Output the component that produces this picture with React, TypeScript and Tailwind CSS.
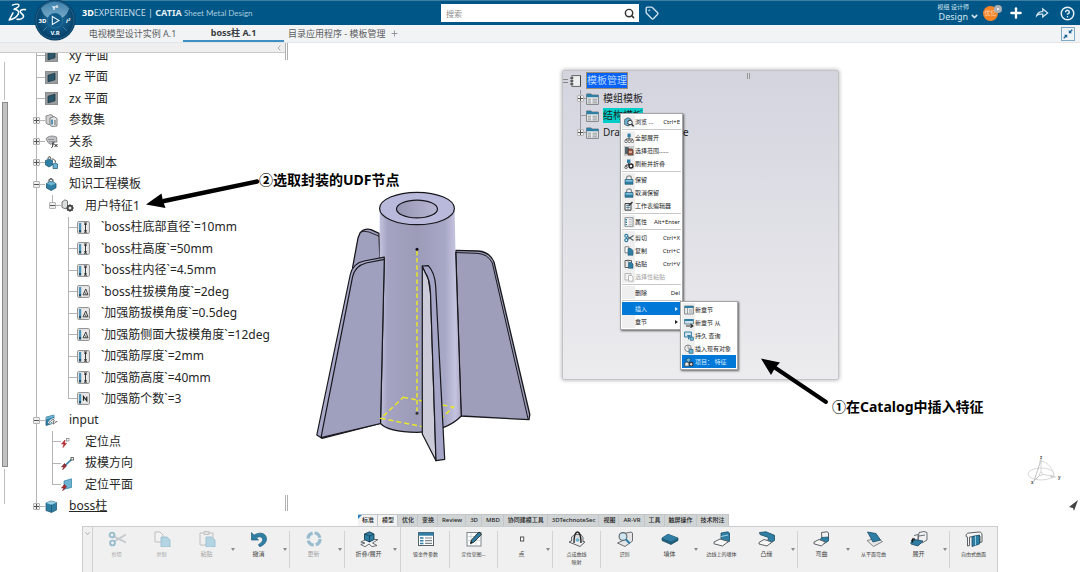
import React from "react";
import { ChevronDown, ChevronLeft, Plus, Search, Tag } from "lucide-react";
import { RiShareForwardLine } from "react-icons/ri";

const BLUE = "#2f7fa5";
const LIGHT = "#6bb3d3";
const DARK = "#5b6166";

/* ---------- Header ---------- */

function Logo() {
  return (
    <svg className="h-[20px] w-[22px]" viewBox="0 0 22 20" fill="none" stroke="#fff" strokeLinecap="round" strokeLinejoin="round" aria-hidden="true">
      <path d="M5.500 2.200C8 1 12.200.6 12 2.400c-.2 1.700-2.500 2.800-4.600 3.600" strokeWidth="1.300" />
      <path d="M7 6.200c3.600.4 5.400 2 4.400 4.400-1.100 2.800-5 5.400-9.200 6.400L6 9.800" strokeWidth="1.500" />
      <path d="M18.400 6.600c-2.800-.4-5 .3-5.200 1.900-.2 1.600 3.600 2.600 3.400 4.800-.2 2.200-3.600 3.200-6.600 3" strokeWidth="1.600" />
    </svg>
  );
}

function Compass() {
  return (
    <svg className="h-[42px] w-[42px]" viewBox="0 0 42 42" aria-hidden="true">
      <defs>
        <radialGradient id="dial" cx=".5" cy=".45" r=".55">
          <stop offset="0" stopColor="#2d78a5" />
          <stop offset=".6" stopColor="#0d527e" />
          <stop offset="1" stopColor="#053a60" />
        </radialGradient>
        <linearGradient id="gloss" x1="0" y1="0" x2="0" y2="1">
          <stop offset="0" stopColor="#4c8fb8" />
          <stop offset="1" stopColor="#8fbbd6" />
        </linearGradient>
      </defs>
      <circle cx="21" cy="21" r="20.500" fill="url(#dial)" />
      <circle cx="21" cy="21" r="19" fill="none" stroke="#2d6f98" strokeWidth=".7" />
      <path d="M7 9.500A18 18 0 0 1 35 9.500Q34 15 28 19a8.500 8.500 0 0 0-14 0Q8 15 7 9.500Z" fill="url(#gloss)" opacity=".8" />
      <circle cx="21" cy="21.500" r="7.500" fill="#105a89" stroke="#2e7cab" strokeWidth=".6" />
      <path d="M18.300 17.500 25 21.500l-6.700 4Z" fill="none" stroke="#e8f2f8" strokeWidth="1.100" />
      <path d="M9 32l4-4M33 32l-4-4" stroke="#3f88b3" strokeWidth=".8" />
      <g fill="#fff" fontFamily="Noto Sans, sans-serif" fontWeight="700" textAnchor="middle">
        <text x="8.500" y="23.500" fontSize="6">3D</text>
        <text x="34" y="23.500" fontSize="6" fontStyle="italic">i²</text>
        <text x="21" y="36" fontSize="6">V.R</text>
        <text x="21" y="11" fontSize="6">Y⁶</text>
      </g>
    </svg>
  );
}

function Header() {
  return (
    <header className="relative grid h-[25px] shrink-0 grid-cols-[1fr_auto_1fr] items-center border-t border-[#3f7da3] bg-[#005686] text-white">
      <div className="flex items-center pl-[7px]">
        <Logo />
        <h1 className="ml-[53px] whitespace-nowrap text-[9px] leading-3 text-[#c4dbe8]">
          <b className="text-white">3D</b>EXPERIENCE | <b className="text-[#e2edf4]">CATIA</b>{" "}
          <span className="font-['Lato',sans-serif] text-[8px] text-[#a9cbdf]">Sheet Metal Design</span>
        </h1>
      </div>
      <form className="flex h-[18px] w-[198px] items-center bg-white pr-[4px]" onSubmit={(e) => e.preventDefault()}>
        <input
          aria-label="搜索"
          placeholder="搜索"
          className="h-full min-w-0 flex-1 bg-transparent pl-[5px] text-[8px] text-gray-700 outline-none placeholder:text-[#8d8d8d]"
        />
        <button type="submit" aria-label="搜索" className="text-[#333]">
          <Search size={11} strokeWidth={3.200} />
        </button>
      </form>
      <div className="flex items-center justify-between pl-[6px] pr-[5px]">
        <button aria-label="标签" className="text-[#cfe2ee]">
          <Tag size={14} strokeWidth={2.400} />
        </button>
        <div className="flex items-center gap-[11px]">
          <button className="flex flex-col items-end leading-none text-[#d5e6f0]">
            <span className="pr-[10px] text-[6px] leading-[7px]">模组 设计师</span>
            <span className="flex items-center gap-[2px] text-[9px] leading-[11px]">
              Design
              <ChevronDown size={9} strokeWidth={4} />
            </span>
          </button>
          <button aria-label="用户" className="relative -ml-[7px] mr-[2px] h-[15px] w-[15px] rounded-full bg-[#f58426] text-[6px] leading-[15px] text-[#ffd9b8]">
            优忆
            <span className="absolute -right-[4px] -top-[1px] grid h-[8px] w-[8px] place-items-center rounded-full bg-[#a9b0b6]">
              <span className="h-[2px] w-[2px] rounded-full bg-white" />
            </span>
          </button>
          <button aria-label="添加" className="-ml-[3px]"><Plus size={16} strokeWidth={3.500} /></button>
          <button aria-label="共享" className="-ml-[1px]"><RiShareForwardLine size={15} color="#d5e6f0" /></button>
          <button aria-label="帮助">
            <svg className="h-[15px] w-[15px]" viewBox="0 0 24 24" fill="none" stroke="#e6f0f6" strokeWidth="2.400" strokeLinecap="round" strokeLinejoin="round">
              <circle cx="12" cy="12" r="10" />
              <path d="M9.090 9a3 3 0 0 1 5.830 1c0 2-3 3-3 3M12 17h.01" />
            </svg>
          </button>
        </div>
      </div>
      <button aria-label="罗盘" className="absolute left-[34px] -top-[2px] z-10">
        <Compass />
      </button>
    </header>
  );
}

function DocumentTabs() {
  return (
    <nav className="flex h-[18px] shrink-0 items-center border-b border-[#e3e5e7] bg-[#f2f3f5] pl-[82px] pr-[5px] text-[9px] text-[#5b5e61]">
      <button className="h-full w-[101px] whitespace-nowrap leading-[16px]">电视模型设计实例 A.1</button>
      <button className="h-full w-[101px] whitespace-nowrap border-b-2 border-[#3f8fc4] font-bold leading-[16px] text-[#3b3e41]">boss柱 A.1</button>
      <button className="h-full whitespace-nowrap px-[4px] leading-[16px]">目录应用程序 - 模板管理</button>
      <button aria-label="新建标签页" className="text-[#8f9295]"><Plus size={9} strokeWidth={2.500} /></button>
      <button aria-label="退出全屏" className="ml-auto grid h-[14px] w-[14px] place-items-center border border-[#7fa9c4] bg-[#eef4f8]">
        <svg className="h-[10px] w-[10px]" viewBox="0 0 10 10" fill="#14608f" stroke="#14608f">
          <path d="M5.800 1v3.200H9ZM4.200 9V5.800H1Z" stroke="none" />
          <path d="M6.500 3.500 9.300.7M3.500 6.500.7 9.300" strokeWidth="1.300" />
        </svg>
      </button>
    </nav>
  );
}

/* ---------- Specification tree ---------- */

type TreeIconName = "plane" | "params" | "relation" | "copy" | "template" | "udf" | "length" | "angle" | "number" | "input" | "point" | "line" | "face" | "body";

function TreeIcon({ name }: { name: TreeIconName }) {
  const box = (
    <>
      <rect x=".6" y=".6" width="11.800" height="11.800" rx="1" fill="#e9e9e9" stroke="#8a8a8a" />
      <rect x="2" y="2" width="2.200" height="7" fill="#4b93b9" />
      <rect x="2" y="9" width="2.200" height="2.500" fill="#1f4f69" />
    </>
  );
  const art: Record<TreeIconName, React.ReactNode> = {
    plane: (
      <>
        <rect x=".5" y=".5" width="12" height="12" fill="#9a9d9f" stroke="#8b8e90" />
        <path d="M3 4.200 10 2.200v6.600L3 10.800Z" fill="#2b5569" stroke="#17323f" strokeWidth=".7" />
      </>
    ),
    params: (
      <>
        <path d="M1 2l5-1.500L8 2v8l-5 .5L1 9Z" fill="#cfd1d2" stroke="#777" strokeWidth=".8" />
        <path d="M5 4l4-1.500 3 2V12l-5 .5L5 11Z" fill="#e6e6e6" stroke="#666" strokeWidth=".8" />
        <path d="M7 5.500v5" stroke={BLUE} strokeWidth="1.600" />
        <path d="M10 6v5" stroke="#666" />
      </>
    ),
    relation: (
      <>
        <path d="M1 4C3 .5 8 .5 11.500 2L12 7H8L6 9.500 3 7.500Z" fill="#bfc2c4" stroke="#777" strokeWidth=".8" />
        <path d="M3 4.500h6M4 6.500h4" stroke="#777" strokeWidth=".6" />
        <path d="M6.500 12.500c1 0 1-1 1.300-3s.6-2.500 1.700-2.500M7 9h2.300M9.500 9l3 3M12.500 9l-3 3" fill="none" stroke="#222" />
      </>
    ),
    copy: (
      <>
        <path d="M3 3V1.500L5 .5 6 3" fill="none" stroke="#555" />
        <path d="M.5 4.500 4 3l3.500 1.500v4.500L4 11 .5 9Z" fill={BLUE} stroke="#1b5270" strokeWidth=".7" />
        <path d="M8 8l2-1 2.500 1v4.500H8Z" fill={LIGHT} stroke="#1b5270" strokeWidth=".7" />
        <path d="M7 3c2 0 3.500 1 3.500 3.500" fill="none" stroke="#444" />
      </>
    ),
    template: (
      <>
        <path d="M4 4V2l2-1.500L8 2v2" fill="none" stroke="#555" strokeWidth="1.200" />
        <path d="M1.500 5.500 6 3.200l5 2.300v4.300L6.200 12.500 1.500 10Z" fill={BLUE} stroke="#1b5270" strokeWidth=".8" />
        <path d="M1.500 5.500 6.200 7.500 11 5.500 6 3.200Z" fill={LIGHT} />
      </>
    ),
    udf: (
      <>
        <path d="M1 3 4 .8 6.500 2v4l1.500.7L5 10 1 8.500Z" fill="#dcdedf" stroke="#666" strokeWidth=".9" />
        <circle cx="9" cy="9" r="2.400" fill="none" stroke="#444" strokeWidth="1.600" />
        <path d="M9 5v8M5 9h8M6.200 6.200l5.600 5.600M11.800 6.200l-5.600 5.600" stroke="#444" strokeWidth=".9" />
        <circle cx="9" cy="9" r="1.200" fill="#eee" />
      </>
    ),
    length: (
      <>
        {box}
        <path d="M8.500 2.800v7.600M7 2h3M7 11.200h3M7.500 4l1-1.500 1 1.500M7.500 9.200l1 1.500 1-1.500" fill="none" stroke="#222" strokeWidth=".9" />
      </>
    ),
    angle: (
      <>
        {box}
        <path d="M6 9.800h5L8.800 4 6 9.800M7.500 7.500c1 0 1.600 1 1.600 2.200" fill="none" stroke="#333" strokeWidth=".9" />
      </>
    ),
    number: (
      <>
        {box}
        <path d="M6.500 8.800V4.500L9.800 8.800V4.500" fill="none" stroke="#222" strokeWidth="1.200" />
      </>
    ),
    input: (
      <>
        <path d="M1 3.200 9 1v8L1 11.500Z" fill={BLUE} stroke="#1b5270" strokeWidth=".7" />
        <path d="M1 3.200 9 1v2L1 5.500Z" fill={LIGHT} />
        <path d="M4 9.500C5 6.500 8 5 9 5.800s-2 3.700-1 4.200 2.500-3 4.200-2.500" fill="none" stroke="#fff" strokeWidth="2.600" />
        <path d="M4 9.500C5 6.500 8 5 9 5.800s-2 3.700-1 4.200 2.500-3 4.200-2.500" fill="none" stroke="#555" />
      </>
    ),
    point: (
      <>
        <path d="M4 5 .5 9 3 8.700l-1 3.800L5.500 8.200 3.500 8.500Z" fill="#c22a2e" stroke="#a32024" strokeWidth=".6" />
        <rect x="5.500" y="3.500" width="2.500" height="2.500" fill="#fff" stroke="#888" strokeWidth=".8" />
      </>
    ),
    line: (
      <>
        <path d="M3 9.500 11 2" stroke={BLUE} strokeWidth="1.700" />
        <rect x="10" y=".6" width="2.400" height="2.400" fill="#fff" stroke="#444" strokeWidth=".8" />
        <path d="M3.500 6.500 .5 10 3 9.700 1.500 12.800 5.500 9Z" fill="#9c3035" stroke="#6e1d21" strokeWidth=".6" />
      </>
    ),
    face: (
      <>
        <path d="M3 3 10.500.8v8.700L3 11.200Z" fill={LIGHT} stroke={BLUE} strokeWidth=".7" />
        <path d="M3.500 6.500 .5 10 3 9.700 1.500 12.800 5.500 9Z" fill="#b8282d" stroke="#7a1d21" strokeWidth=".6" />
      </>
    ),
    body: (
      <>
        <path d="M1 3 6 1l5.500 1.500v7.500L6.500 12.500 1 10.500Z" fill={BLUE} stroke="#1b5270" strokeWidth=".7" />
        <path d="M1 3 6 1l5.500 1.500L6.500 4.800Z" fill="#9ad0e6" />
        <path d="M6.500 4.800v7.500" stroke="#1b5270" strokeWidth=".7" />
      </>
    ),
  };
  return <svg className="h-[13px] w-[13px]" viewBox="0 0 13 13" aria-hidden="true">{art[name]}</svg>;
}

type Node = { label: string; icon: TreeIconName; depth: 0 | 1 | 2; fold?: "+" | "-"; last?: boolean; underline?: boolean };

const NODES: Node[] = [
  { label: "xy 平面", icon: "plane", depth: 0 },
  { label: "yz 平面", icon: "plane", depth: 0 },
  { label: "zx 平面", icon: "plane", depth: 0 },
  { label: "参数集", icon: "params", depth: 0, fold: "+" },
  { label: "关系", icon: "relation", depth: 0, fold: "+" },
  { label: "超级副本", icon: "copy", depth: 0, fold: "+" },
  { label: "知识工程模板", icon: "template", depth: 0, fold: "-" },
  { label: "用户特征1", icon: "udf", depth: 1, fold: "-", last: true },
  { label: "`boss柱底部直径`=10mm", icon: "length", depth: 2 },
  { label: "`boss柱高度`=50mm", icon: "length", depth: 2 },
  { label: "`boss柱内径`=4.5mm", icon: "length", depth: 2 },
  { label: "`boss柱拔模角度`=2deg", icon: "angle", depth: 2 },
  { label: "`加强筋拔模角度`=0.5deg", icon: "angle", depth: 2 },
  { label: "`加强筋侧面大拔模角度`=12deg", icon: "angle", depth: 2 },
  { label: "`加强筋厚度`=2mm", icon: "length", depth: 2 },
  { label: "`加强筋高度`=40mm", icon: "length", depth: 2 },
  { label: "`加强筋个数`=3", icon: "number", depth: 2, last: true },
  { label: "input", icon: "input", depth: 0, fold: "-" },
  { label: "定位点", icon: "point", depth: 1 },
  { label: "拔模方向", icon: "line", depth: 1 },
  { label: "定位平面", icon: "face", depth: 1, last: true },
  { label: "boss柱", icon: "body", depth: 0, fold: "+", underline: true, last: true },
];

function FoldBox({ sign }: { sign: "+" | "-" }) {
  return (
    <button aria-label={sign === "+" ? "展开" : "折叠"} className="relative grid h-[7px] w-[7px] place-items-center rounded-[1px] border border-[#b3b3b3] bg-[#f0f0f0]">
      <span className="col-start-1 row-start-1 h-px w-[5px] bg-[#555]" />
      {sign === "+" && <span className="col-start-1 row-start-1 h-[5px] w-px bg-[#555]" />}
    </button>
  );
}

function TreeRow({ node }: { node: Node }) {
  return (
    <li className="flex items-center pl-[23px]">
      {node.depth > 0 && <span className="ml-[3px] mr-[12px] w-px self-stretch bg-[#b5b5b5]" />}
      {node.depth > 1 && <span className="w-4" />}
      <span className="relative flex w-[12px] items-center self-stretch">
        <span className={`absolute left-[3px] top-0 w-px bg-[#b5b5b5] ${node.last ? "h-1/2" : "h-full"}`} />
        <span className="absolute left-[3px] h-px w-[9px] bg-[#b5b5b5]" />
        {node.fold && <FoldBox sign={node.fold} />}
      </span>
      <TreeIcon name={node.icon} />
      <span className={`ml-[11px] whitespace-nowrap text-[12px] leading-[14px] text-[#262626] ${node.underline ? "underline" : ""}`}>{node.label}</span>
    </li>
  );
}

function TreePanel() {
  return (
    <aside className="flex w-[288px] shrink-0">
      <div className="flex min-w-0 flex-1 flex-col">
        <div className="flex h-[10px] shrink-0 items-center justify-end border-b border-[#c9c9c9] bg-[#efefef] pr-[2px] text-[#888]">
          <ChevronLeft size={8} />
        </div>
        <div className="flex min-h-0 flex-1">
          <div className="flex w-[10px] flex-col items-start pb-[10px] pl-[2px] pt-[9px]">
            <span className="ml-[2px] h-[38px] w-px bg-[#bdbdbd]" />
            <span className="mt-[2px] w-[6px] flex-1 border border-[#8b8b8b] bg-[#c2c2c2]" />
            <span className="ml-[2px] mt-[2px] h-[35px] w-px bg-[#bdbdbd]" />
          </div>
          <div className="min-w-0 flex-1 overflow-hidden">
            <ul className="-mt-2 grid h-[calc(100%+11px)] auto-rows-fr">
              {NODES.map((n) => <TreeRow key={n.label} node={n} />)}
            </ul>
          </div>
        </div>
      </div>
      <div className="flex w-[3px] flex-col justify-between pb-[3px]">
        <span className="h-[17px] border-x border-[#b0b0b0]" />
        <span className="h-[16px] border-x border-[#b0b0b0]" />
      </div>
    </aside>
  );
}

/* ---------- 3D scene ---------- */

function Model() {
  return (
    <svg className="h-[272px] w-[216px]" viewBox="316 191 216 272" role="img" aria-label="boss柱">
      <defs>
        <linearGradient id="barrel" x1="0" x2="1" y1="0" y2="0">
          <stop offset="0" stopColor="#c3c3e0" />
          <stop offset=".1" stopColor="#a4a4c2" />
          <stop offset=".45" stopColor="#9c9cb9" />
          <stop offset=".8" stopColor="#a7a7c6" />
          <stop offset=".93" stopColor="#c4c4e0" />
          <stop offset="1" stopColor="#a9a9c6" />
        </linearGradient>
        <linearGradient id="bore" x1="0" x2="1" y1="0" y2="0">
          <stop offset="0" stopColor="#9696b3" />
          <stop offset="1" stopColor="#b6b6d2" />
        </linearGradient>
      </defs>
      <g stroke="#17171c" strokeWidth="1.300" strokeLinejoin="round">
        <path d="M379 233.300 371 229.600Q364 228 360 233L358 238 352.500 268 380 262Z" fill="#9f9fbe" />
        <path d="M379 236.200 369 232Q363 230.500 361 232" fill="none" strokeWidth=".9" />
        <path d="M455.700 250.300 478 251Q490 252 494 262L529.800 414.500 529 419.700 461 416Z" fill="#9e9ebb" />
        <path d="M455.700 252.600 477 253.300Q488 254 492.300 263L528 418.800" fill="none" strokeWidth="1" />
      </g>
      <path d="M379.700 209 379.500 423Q388 432 417 432.400 447 431 461 416L455.500 252 454.600 209Z" fill="url(#barrel)" />
      <path d="M380 423Q388 432 417 432.400 447 431 461.300 416L455.700 252" fill="none" stroke="#17171c" strokeWidth="1.200" />
      <ellipse cx="417" cy="208.500" rx="37.400" ry="16.200" fill="#b9b9dc" stroke="#17171c" strokeWidth="1.200" />
      <ellipse cx="417" cy="209" rx="20.500" ry="8.900" fill="url(#bore)" stroke="#17171c" strokeWidth="1.200" />
      <g stroke="#17171c" strokeWidth="1.200" strokeLinejoin="round">
        <path d="M384.300 257.200 364 261Q352.500 263.500 350.200 275L316.800 435 322 438.300 380.500 423.500Z" fill="#a8a8c9" />
        <path d="M384.300 259.400 366 263Q355 266 352.600 276.700L321 437.700 380.500 423.500Z" fill="#9f9fbe" />
      </g>
      <g fill="none" stroke="#e9e52a" strokeWidth="1.500">
        <path d="M403.300 397.300 453.300 407 430.700 428.300 381 418.300Z" strokeDasharray="5 3" />
        <path d="M417 251V411" strokeDasharray="4.500 2.600" />
      </g>
      <circle cx="417" cy="249.300" r="1.500" fill="#111" />
      <circle cx="417" cy="413.200" r="1.500" fill="#333" />
      <g stroke="#17171c" strokeWidth="1.200" strokeLinejoin="round">
        <path d="M422.300 266 428.300 279 430.500 293 436 460.700 422.300 434Z" fill="#cacad8" />
        <path d="M422.300 266 428.300 265.700Q435 273 435.700 286.700L444.700 459.300 436 460.700 430.500 293Q430 279 425 272Z" fill="#a5a5c7" />
      </g>
    </svg>
  );
}

function AxisTriad() {
  return (
    <svg className="h-[32px] w-[36px]" viewBox="0 0 36 32" fill="none" stroke="#d4d4d4" strokeWidth=".9" aria-hidden="true">
      <ellipse cx="15" cy="19" rx="13" ry="6" />
      <path d="M15 19V4l-1.500 4M15 19l15 3M15 6c7 1 12 8 13 15" />
      <path d="M15 19 8 26M15 5 8 26" stroke="#bbb" />
      <circle cx="15" cy="19" r="1.500" fill="#fff" />
      <circle cx="15" cy="6" r="1" />
      <path d="m24 20 5 2-4 1" fill="#ccc" />
      <g fill="#555" stroke="none" fontSize="4.500" fontFamily="Noto Sans, sans-serif" fontWeight="700">
        <text x="14" y="4">z</text>
        <text x="32" y="24">y</text>
        <text x="5" y="29">x</text>
      </g>
    </svg>
  );
}

/* ---------- Catalog window ---------- */

function FolderIcon() {
  return (
    <svg className="h-[12px] w-[13px]" viewBox="0 0 13 12" aria-hidden="true">
      <path d="M.6 3V.9h4.500L6.200 2h6.200v9.400H.6Z" fill="#ebebeb" stroke="#6f777b" strokeWidth=".9" />
      <path d="M.6 3V.9h4.500L6.200 2h6.200v2.200H.6Z" fill={BLUE} />
      <path d="M2 6.200h3M2 8h3M2 9.800h3M6.500 6.200h4.500M6.500 8h4.500M6.500 9.800h4.500" stroke="#7e878b" strokeWidth=".8" />
    </svg>
  );
}

const SECTIONS = [
  { label: "模组模板", fold: true, mark: "" },
  { label: "结构模板", fold: false, mark: "bg-[#00cdc8]" },
  { label: "Drawing Template", fold: true, mark: "" },
];

function CatalogWindow() {
  return (
    <section aria-label="模板管理" className="h-[310px] w-[277px] rounded-[2px] border border-[#c4c4c8] bg-linear-to-b from-[#d4d4df] to-[#ececee] text-[10px] text-[#1f1f1f] shadow-[0_0_4px_rgba(0,0,0,0.35)]">
      <div className="flex h-[19px] items-center">
        <span className="h-[4px] w-[5px] border-y border-[#888]" />
        <svg className="ml-[2px] h-[12px] w-[12px]" viewBox="0 0 12 12" aria-hidden="true">
          <rect x="2" y=".6" width="8.500" height="10.800" fill="#eee" stroke="#666" />
          <path d="M.3 3h3M.3 6h3M.3 9h3" stroke="#444" strokeWidth="1.300" />
          <path d="M10.500 1v10" stroke="#444" />
        </svg>
        <span className="ml-[5px] bg-[#0a62f5] leading-[15px] text-[#b9dbff] outline outline-[#9a9078]">模板管理</span>
        <span className="mb-[10px] ml-[120px] h-[6px] w-[3px] border-x border-[#999]" />
      </div>
      <ul>
        {SECTIONS.map((s, i) => (
          <li key={s.label} className="flex h-[17px] items-center pl-[14px]">
            <span className="relative flex w-[9px] items-center self-stretch">
              <span className={`absolute left-[3px] top-0 w-px bg-[#9a9aa3] ${i === 2 ? "h-1/2" : "h-full"}`} />
              <span className="absolute left-[3px] h-px w-[6px] bg-[#9a9aa3]" />
              {s.fold && <FoldBox sign="+" />}
            </span>
            <FolderIcon />
            <span className={`ml-[4px] whitespace-nowrap leading-[15px] ${s.mark}`}>{s.label}</span>
          </li>
        ))}
      </ul>
    </section>
  );
}

type MenuIconName = "browse" | "expand" | "range" | "refresh" | "lock" | "sheet" | "props" | "cut" | "copy" | "paste" | "special" | "chapter" | "chapterFrom" | "query" | "insert" | "item";

function MenuIcon({ name }: { name: MenuIconName }) {
  const art: Record<MenuIconName, React.ReactNode> = {
    browse: (
      <>
        <path d="M.7 2.500 4 .8l3 1.500v5L4 9 .7 7.500Z" fill={LIGHT} stroke="#3d5561" strokeWidth=".8" />
        <circle cx="6" cy="5.500" r="2.300" fill="#e8f2f7" stroke="#333" />
        <path d="m7.600 7.200 2 2.200" stroke="#222" strokeWidth="1.400" />
      </>
    ),
    expand: (
      <>
        <rect x="3.500" y=".6" width="3.200" height="3.600" fill={BLUE} />
        <path d="M5 4v2M2 8V6h6.500v2" fill="none" stroke="#444" strokeWidth=".9" />
        <circle cx="2" cy="8.300" r="1.300" fill="#fff" stroke="#555" strokeWidth=".8" />
        <circle cx="5.200" cy="8.300" r="1.300" fill="#fff" stroke="#555" strokeWidth=".8" />
        <circle cx="8.400" cy="8.300" r="1.300" fill="#fff" stroke="#555" strokeWidth=".8" />
      </>
    ),
    range: (
      <>
        <rect width="10" height="10" fill="#c9c9c9" />
        <path d="M1 1h3l1 1v6H1Z" fill="#54646d" />
        <path d="M4 3h4l1 1v5H4Z" fill="#a4553f" stroke="#4a3a35" strokeWidth=".7" />
        <path d="M5 6h3" stroke="#fff" />
      </>
    ),
    refresh: (
      <>
        <rect x="3" y=".5" width="3.400" height="3.600" fill={BLUE} />
        <path d="M4.700 4v2M2 8V6h4" fill="none" stroke="#333" />
        <circle cx="2" cy="8.300" r="1.200" fill="#fff" stroke="#333" strokeWidth=".8" />
        <circle cx="7" cy="7" r="2" fill="#eee" stroke="#222" strokeWidth="1.400" />
      </>
    ),
    lock: (
      <>
        <path d="M2.500 5V3.200C2.500.2 7.500.2 7.500 3.200V5" fill="none" stroke="#8a9297" strokeWidth="1.300" />
        <path d="M1 4.500h8V9.300H1Z" fill={BLUE} stroke="#21566f" strokeWidth=".6" />
        <path d="M1.500 5h7v1.700h-7Z" fill="#7dbfdc" />
      </>
    ),
    sheet: (
      <>
        <path d="M1 2.500h6v6.700H1Z" fill="#e8eef1" stroke="#333" strokeWidth=".9" />
        <path d="M2 4.500h4M2 6.500h4M4 3v6" stroke="#4a6d7e" strokeWidth=".7" />
        <path d="M5 4.500 8.500 1" stroke="#333" strokeWidth="1.400" />
      </>
    ),
    props: (
      <>
        <rect x="1" y=".8" width="8" height="8.400" fill="#fff" stroke="#6b7479" strokeWidth=".8" />
        <path d="M2.200 2v6" stroke={BLUE} strokeWidth="1.600" strokeDasharray="1.500 1" />
        <path d="M4.500 2.800H8M4.500 5H8M4.500 7.200H8" stroke="#888" strokeWidth=".7" />
      </>
    ),
    cut: (
      <>
        <path d="M3.500 3.500 9.500 7.500M3.500 6.500 9.500 2.500" stroke="#51616a" strokeWidth="1.200" />
        <circle cx="2.300" cy="2.800" r="1.500" fill="none" stroke={BLUE} strokeWidth="1.200" />
        <circle cx="2.300" cy="7.200" r="1.500" fill="none" stroke={BLUE} strokeWidth="1.200" />
      </>
    ),
    copy: (
      <>
        <path d="M1 .8h4v6H1Z" fill="#fff" stroke="#666" strokeWidth=".8" />
        <path d="M4 2.500h3L9 4.500v4.700H4Z" fill={BLUE} stroke="#21566f" strokeWidth=".6" />
      </>
    ),
    paste: (
      <>
        <path d="M1 1.500h6.500v7H1Z" fill="#e6e6e6" stroke="#555" strokeWidth=".9" />
        <path d="M3 .8h2.500v1.500H3Z" fill="#666" />
        <path d="M4.500 3.500h3L9 5v4.200H4.500Z" fill={BLUE} stroke="#21566f" strokeWidth=".6" />
      </>
    ),
    special: (
      <>
        <path d="M1 1.500h6v6.500H1Z" fill="#f3f3f3" stroke="#aaa" strokeWidth=".8" />
        <path d="M4.500 3.500h3L9 5v4.200H4.500Z" fill="#fafafa" stroke="#aaa" strokeWidth=".8" />
      </>
    ),
    chapter: (
      <>
        <path d="M.6 1h8.800v8H.6Z" fill="#eee" stroke="#69747a" strokeWidth=".8" />
        <path d="M.6 1h8.800v2H.6Z" fill={BLUE} />
        <path d="M3.500 3v6M5 5h3.500M5 7h3.500" stroke="#838c90" strokeWidth=".8" />
      </>
    ),
    chapterFrom: (
      <>
        <path d="M.6 1.500h8.800V6H.6Z" fill="#cfe3ec" stroke="#4e6f7f" strokeWidth=".8" />
        <path d="M.6 1h8.800v2H.6Z" fill={BLUE} />
        <path d="M2 8h7M6.500 6 9 8 6.500 9.700" fill="none" stroke="#333" strokeWidth="1.100" />
      </>
    ),
    query: (
      <>
        <path d="M.6 1h6.800v5H.6Z" fill="#d8e6ed" stroke={BLUE} />
        <path d="M3 4h4L5.500 6v3L4 8V6Z" fill={BLUE} />
        <rect x="6.500" y="6" width="3" height="3.300" fill={LIGHT} stroke="#21566f" strokeWidth=".5" />
      </>
    ),
    insert: (
      <>
        <circle cx="4" cy="4.300" r="3.300" fill="#eee" stroke="#888" />
        <path d="M4 1v3.300h3.300" fill="none" stroke="#888" strokeWidth=".8" />
        <path d="M5 5.500h4v3.800H5Z" fill={LIGHT} stroke="#36708a" strokeWidth=".8" />
      </>
    ),
    item: (
      <>
        <path d="M1.500 3 4.500.8 7 2.500 5 5.500Z" fill={LIGHT} stroke="#14384a" strokeWidth=".6" />
        <path d="M.7 6 3 4.800 5 6.200v3H.7Z" fill="#e2e6e8" stroke="#333" strokeWidth=".7" />
        <circle cx="7.200" cy="7.200" r="1.800" fill="#ddd" stroke="#333" strokeWidth="1.100" />
      </>
    ),
  };
  return <svg className="h-[10px] w-[10px]" viewBox="0 0 10 10" aria-hidden="true">{art[name]}</svg>;
}

type MenuEntry = { label: string; icon?: MenuIconName; keys?: string; sub?: boolean; active?: boolean; off?: boolean };

const MENU: MenuEntry[][] = [
  [{ label: "浏览 ...", icon: "browse", keys: "Ctrl+E" }],
  [{ label: "全部展开", icon: "expand" }, { label: "选择范围......", icon: "range" }, { label: "刷新并折叠", icon: "refresh" }],
  [{ label: "保留", icon: "lock" }, { label: "取消保留", icon: "lock" }, { label: "工作表编辑器", icon: "sheet" }],
  [{ label: "属性", icon: "props", keys: "Alt+Enter" }],
  [
    { label: "剪切", icon: "cut", keys: "Ctrl+X" },
    { label: "复制", icon: "copy", keys: "Ctrl+C" },
    { label: "粘贴", icon: "paste", keys: "Ctrl+V" },
    { label: "选择性粘贴", icon: "special", off: true },
  ],
  [{ label: "删除", keys: "Del" }],
  [{ label: "插入", sub: true, active: true }, { label: "章节", sub: true }],
];

const SUBMENU: MenuEntry[] = [
  { label: "新章节", icon: "chapter" },
  { label: "新章节 从", icon: "chapterFrom" },
  { label: "持久 查询", icon: "query" },
  { label: "插入现有对象", icon: "insert" },
  { label: "项目： 特征", icon: "item", active: true },
];

function MenuRow({ entry }: { entry: MenuEntry }) {
  const tone = entry.active ? "bg-[#0078d7] text-[#d9ecfb]" : entry.off ? "text-[#a3a3a3]" : "text-[#222]";
  return (
    <button role="menuitem" disabled={entry.off} className={`flex h-[13px] w-full items-center whitespace-nowrap pr-px text-left text-[6px] leading-[8px] ${tone}`}>
      <span className={`grid w-[13px] place-items-center self-stretch ${entry.active ? "" : "bg-[#efefef]"}`}>
        {entry.icon && <MenuIcon name={entry.icon} />}
      </span>
      <span className="flex-1">{entry.label}</span>
      {entry.keys && <span>{entry.keys}</span>}
      {entry.sub && <span className="mr-[2px] border-y-2 border-l-[3px] border-y-transparent border-l-current" />}
    </button>
  );
}

function ContextMenu() {
  const frame = "border border-[#a5a5a5] bg-white p-px shadow-[1px_1px_2px_rgba(0,0,0,0.6)]";
  return (
    <div className="relative">
      <div role="menu" className={`w-[63px] ${frame}`}>
        {MENU.map((group, i) => (
          <div key={i} className={i ? "mt-px border-t border-[#c8c8c8] pt-px" : ""}>
            {group.map((e) => <MenuRow key={e.label} entry={e} />)}
          </div>
        ))}
      </div>
      <div role="menu" aria-label="插入" className={`absolute -bottom-[40px] left-[60px] w-[58px] ${frame}`}>
        {SUBMENU.map((e) => <MenuRow key={e.label} entry={e} />)}
      </div>
    </div>
  );
}

/* ---------- Ribbon ---------- */

type ToolIconName = "cut" | "copy" | "paste" | "undo" | "update" | "fold" | "params" | "sketch" | "point" | "curve" | "recognize" | "wall" | "edgeWall" | "flange" | "bend" | "flatBend" | "unfold" | "freeform";

function ToolIcon({ name }: { name: ToolIconName }) {
  const art: Record<ToolIconName, React.ReactNode> = {
    cut: (
      <>
        <path d="M6 5.500 18 11.500M6 10.500 18 3.500" stroke="#8f999e" strokeWidth="1.800" />
        <circle cx="4" cy="4" r="2.400" fill="none" stroke={BLUE} strokeWidth="1.900" />
        <circle cx="4.500" cy="12" r="2.400" fill="none" stroke={BLUE} strokeWidth="1.900" />
      </>
    ),
    copy: (
      <>
        <path d="M2 1h5l3 3v7H2Z" fill="#f6f6f6" stroke="#888" />
        <path d="M8 6h6l3 3v7H8Z" fill={LIGHT} stroke={BLUE} strokeWidth=".8" />
      </>
    ),
    paste: (
      <>
        <path d="M2 2h13v12H2Z" fill="#eee" stroke="#888" />
        <path d="M6 .6h5v2.800H6Z" fill="#ddd" stroke="#888" />
        <path d="M8 6h5.500L17 9v7H8Z" fill={LIGHT} stroke={BLUE} strokeWidth=".8" />
      </>
    ),
    undo: <path d="M1.500 1.500v7.500h7L6.300 6.800C11 4.200 13.800 7.500 12 10.500c-.7 1.300-2 2.300-3.500 3l1 2.200c4-1 7.200-4.200 7-8C16.200 2 9.500.4 4 4.200Z" fill={BLUE} stroke="#225f7e" strokeWidth=".7" />,
    update: <circle cx="9" cy="8" r="6" fill="none" stroke={BLUE} strokeWidth="3.200" strokeDasharray="7.300 2.100" />,
    fold: (
      <>
        <path d="M.8 11 6 8.500l12 0L12.500 12 17 14.500l-5 1.200L9 13l-4 2.700L.8 13.500 5 12Z" fill="#f5f5f5" stroke={DARK} strokeWidth=".9" />
        <path d="M4.500 3 9.500.8 14 3v5.500L9.500 11 4.500 8.500Z" fill={BLUE} stroke="#173f54" strokeWidth=".9" />
        <path d="M4.500 3 9.500 5 14 3M9.500 5v6" fill="none" stroke="#173f54" strokeWidth=".8" />
      </>
    ),
    params: (
      <>
        <rect x="1.500" y="1.500" width="15" height="13" fill="#fff" stroke="#566169" />
        <path d="M1.500 1.500h15v3.200h-15Z" fill={BLUE} />
        <path d="M3 7h3.500M3 9.700h3.500M3 12.400h3.500" stroke={BLUE} strokeWidth="1.500" />
        <path d="M8 7h7M8 9.700h7M8 12.400h7" stroke="#7c858a" strokeWidth="1.200" />
      </>
    ),
    sketch: (
      <>
        <rect x="2" y="1.500" width="14" height="13.500" fill="#fff" stroke="#6f7a81" strokeWidth=".9" />
        <path d="M2 5.500h14M2 9.500h14M6 2v13M11 2v13" stroke="#b9c7ce" strokeWidth=".7" />
        <path d="m5.500 12.500 1-3.500L14 1l2.500 2.300-7.800 8Z" fill={BLUE} stroke="#222" strokeWidth=".9" />
        <path d="m5.500 12.500.6-2 1.600 1.300Z" fill="#111" />
      </>
    ),
    point: <rect x="7.500" y="6" width="3.200" height="4" fill="#fff" stroke="#555" />,
    curve: (
      <>
        <path d="M1 11 6 8.500 17 11 12 15.500Z" fill="#eee" stroke={DARK} />
        <path d="M3.500 10V6L7 3.500h6l2 3V11" fill="#dcdedf" stroke={DARK} strokeWidth=".9" />
        <path d="M6 12C6 3 8 1 9.500 1S13 4 13 12" fill="none" stroke="#222" strokeWidth="1.300" />
        <circle cx="9.500" cy="9" r="1.800" fill={LIGHT} />
      </>
    ),
    recognize: (
      <>
        <path d="M1.500 12 8 9V2.500L15 1l1.500 1v8L9 15.500Z" fill="#e3e4e5" stroke={DARK} strokeWidth=".9" />
        <circle cx="7" cy="5.500" r="3.900" fill="#cfe5ef" stroke="#5b666c" strokeWidth="1.100" />
        <path d="m9.800 8.300 4 4.200" stroke={BLUE} strokeWidth="2" />
      </>
    ),
    wall: (
      <>
        <path d="M1 7 7 3.200 17 7v2.500L10 13.500 1 9.500Z" fill="#225f7e" stroke="#1a4b64" strokeWidth=".7" />
        <path d="M1 7 7 3.200 17 7 10 10.600Z" fill={BLUE} />
      </>
    ),
    edgeWall: (
      <>
        <path d="M8 2 15 .8 16.500 2v8.500L10 12 8 9Z" fill={BLUE} stroke="#1a4b64" strokeWidth=".8" />
        <path d="M8 5.500 15 4" stroke="#9fd3e8" />
        <path d="M1 11 7 8l8.500 2.500-6 4.500L1 12.800Z" fill="#f7f7f7" stroke={DARK} />
      </>
    ),
    flange: (
      <>
        <path d="M1.500 1.500 8 .8l8.500 3.500v5.200L12 12.500l-2-4 .5-2L2 3.500Z" fill={BLUE} stroke="#1a4b64" strokeWidth=".8" />
        <path d="M1 11.500 6 8.500l8 2.500-5 4L1 13Z" fill="#f7f7f7" stroke={DARK} />
      </>
    ),
    bend: (
      <>
        <path d="M8.500 1.500 14 .8l1.500 1V8L9 9.500Z" fill="#f2f2f2" stroke={DARK} />
        <path d="M8.500 6.500 15.500 6v4L10.500 13 7 9Z" fill={BLUE} stroke="#1a4b64" strokeWidth=".7" />
        <path d="M1 11 6 8.500 12.500 11 8.500 15 1 12.800Z" fill="#f7f7f7" stroke={DARK} />
      </>
    ),
    flatBend: (
      <>
        <path d="M2 9.500 12 7l5.500 3.500-9 5Z" fill="#e5e6e7" stroke="#808587" />
        <path d="M2.500 1 11 2.500 15.500 9 8 11Z" fill={BLUE} stroke="#1a4b64" strokeWidth=".8" />
      </>
    ),
    unfold: (
      <>
        <path d="M9 1.500 14 .5l3 1V9l-5 3-4-1Z" fill="#f0f0f0" stroke={DARK} strokeWidth=".9" />
        <path d="M4 4.500 8 3.500v6L3.500 9M9 5l6-1" fill="none" stroke={DARK} strokeWidth=".9" />
        <path d="M1 11 4 8.500l9 1.500-5 5L1 13Z" fill={BLUE} stroke="#1a4b64" strokeWidth=".8" />
        <path d="M2.500 11.500V8.500L1.500 10M4 9.500V7" stroke="#111" strokeWidth="1.200" />
      </>
    ),
    freeform: (
      <>
        <path d="M1 5.500C1 3 2 2 4 2L14 1c2 0 3 1 3 3v7l-2 .5V5l-10.500 1v8.500L2.500 15V6Z" fill="#f5f5f5" stroke={DARK} />
        <path d="m7 5.500 7.500-1.500v9L7 15.500Z" fill={BLUE} stroke="#1a4b64" strokeWidth=".8" />
        <path d="M10.500 5v9.500" stroke="#8fcbe3" />
      </>
    ),
  };
  return <svg className="h-[16px] w-[18px]" viewBox="0 0 18 16" fill="none" aria-hidden="true">{art[name]}</svg>;
}

type Tool = { label: string; icon: ToolIconName; off?: boolean; more?: boolean; small?: boolean };

const TOOLS: Tool[][] = [
  [
    { label: "剪切", icon: "cut", off: true, small: true },
    { label: "复制", icon: "copy", off: true, small: true },
    { label: "粘贴", icon: "paste", off: true, more: true },
    { label: "撤消", icon: "undo", more: true },
  ],
  [{ label: "更新", icon: "update", off: true, more: true }],
  [{ label: "折叠/展开", icon: "fold", more: true }],
  [{ label: "钣金件参数", icon: "params", small: true }],
  [{ label: "定位草图...", icon: "sketch", small: true }],
  [{ label: "点", icon: "point", more: true }],
  [{ label: "点成曲线映射", icon: "curve", small: true }],
  [
    { label: "识别", icon: "recognize", small: true },
    { label: "墙体", icon: "wall", more: true },
    { label: "边线上的墙体", icon: "edgeWall", small: true },
    { label: "凸缘", icon: "flange", more: true },
  ],
  [
    { label: "弯曲", icon: "bend", more: true },
    { label: "从平面弯曲", icon: "flatBend", small: true },
    { label: "展开", icon: "unfold", more: true },
  ],
  [{ label: "自由式曲面", icon: "freeform", small: true }],
];

const RIBBON_TABS = ["标准", "模型", "优化", "变换", "Review", "3D", "MBD", "协同建模工具", "3DTechnoteSec", "视图", "AR-VR", "工具", "触屏操作", "技术附注"];

function ToolButton({ tool }: { tool: Tool }) {
  return (
    <>
      <button disabled={tool.off} className={`flex w-[45px] flex-col items-center pt-[4px] text-[#444] ${tool.off ? "opacity-45" : ""}`}>
        <ToolIcon name={tool.icon} />
        <span className={`mt-[3px] leading-[8px] ${tool.small ? "text-[5px]" : "text-[6px]"} ${tool.icon === "curve" ? "w-[20px]" : "whitespace-nowrap"}`}>{tool.label}</span>
      </button>
      {tool.more && (
        <button aria-label={`${tool.label} 更多`} className="flex w-[7px] justify-center pt-[21px]">
          <span className="h-0 w-0 border-x-2 border-t-[3px] border-x-transparent border-t-[#8a8a8a]" />
        </button>
      )}
    </>
  );
}

function Ribbon() {
  return (
    <footer className="shrink-0 px-[82px]">
      <div role="tablist" className="flex h-[12px] pl-[276px]">
        {RIBBON_TABS.map((t, i) => (
          <button
            key={t}
            role="tab"
            aria-selected={i === 1}
            className={`relative whitespace-nowrap border-r border-t border-[#c3c6c8] pl-[4px] pr-[3px] text-[6px] font-medium leading-[11px] text-[#222] ${i < 2 ? "bg-[#f2f2f2]" : "bg-[#d0d4d5]"}`}
          >
            {i === 0 && <span className="absolute left-0 top-0 border-r-4 border-t-4 border-r-transparent border-t-[#2a86c8]" />}
            {t}
          </button>
        ))}
      </div>
      <div className="flex h-[46px] border-x border-t border-[#c9cdd0] bg-[#f0f0f0]">
        <button aria-label="收起工具栏" className="flex w-[11px] justify-center border-r border-[#d0d0d0] pt-[3px] text-[#777]">
          <ChevronDown size={7} />
        </button>
        {TOOLS.map((group, i) => (
          <div key={group[0].label} className="flex">
            <div className="flex px-px">
              {group.map((t) => <ToolButton key={t.label} tool={t} />)}
            </div>
            {i < TOOLS.length - 1 && <span className={`w-px bg-[#d2d2d2] ${i === 2 ? "mx-px" : "my-[4px]"}`} />}
          </div>
        ))}
      </div>
    </footer>
  );
}

/* ---------- Page ---------- */

export default function App() {
  return (
    <div className="flex min-h-screen flex-col overflow-hidden bg-white font-['Noto_Sans','Noto_Sans_CJK_SC',sans-serif]">
      <Header />
      <DocumentTabs />
      <main className="relative flex flex-1">
        <TreePanel />
        <div className="absolute left-[316px] top-[148px]"><Model /></div>
        <div className="absolute left-[562px] top-[27px]"><CatalogWindow /></div>
        <div className="absolute left-[620px] top-[70px]"><ContextMenu /></div>
        <svg className="absolute left-[145px] top-[133px] h-[34px] w-[116px]" viewBox="145 176 116 34" aria-hidden="true">
          <path d="M257 181.500 164 201" stroke="#000" strokeWidth="4.400" strokeLinecap="round" />
          <path d="M146 204.500 161.500 193.500 163 201 165.500 208Z" />
        </svg>
        <p className="absolute left-[259px] top-[127px] whitespace-nowrap text-[14px] font-bold leading-[20px] text-black">②选取封装的UDF节点</p>
        <svg className="absolute left-[758px] top-[311px] h-[54px] w-[74px]" viewBox="758 354 74 54" aria-hidden="true">
          <path d="M826 402 774 367" stroke="#000" strokeWidth="4" strokeLinecap="round" />
          <path d="M761 358.500 780 362.500 775 368 771 375Z" />
        </svg>
        <p className="absolute left-[832px] top-[354px] whitespace-nowrap text-[14px] font-bold leading-[20px] text-black">①在Catalog中插入特征</p>
        <div className="absolute right-[18px] top-[412px]"><AxisTriad /></div>
        <svg className="absolute right-[2px] top-[457px] h-[12px] w-[9px]" viewBox="0 0 9 12" aria-hidden="true">
          <path d="M9 0 5 11 4 8 0 7Z" fill="#444" />
        </svg>
      </main>
      <Ribbon />
    </div>
  );
}
